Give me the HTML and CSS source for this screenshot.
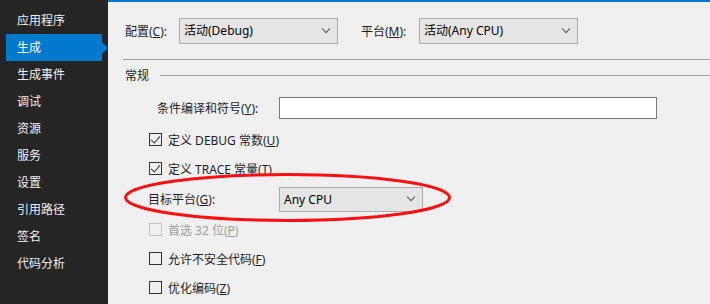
FILE: index.html
```html
<!DOCTYPE html>
<html lang="zh-CN">
<head>
    <meta charset="UTF-8">
    <title>项目属性 - 生成</title>
    <link rel="stylesheet" href="styles.css">
</head>
<body>

    <!-- Menú lateral -->
    <ul class="side-menu">
        <li>应用程序</li>
        <li class="active">生成</li>
        <li>生成事件</li>
        <li>调试</li>
        <li>资源</li>
        <li>服务</li>
        <li>设置</li>
        <li>引用路径</li>
        <li>签名</li>
        <li>代码分析</li>
    </ul>

    <div class="page">
        <div class="config-row">
            <span class="cfg-label">配置(<u>C</u>):</span>
            <div class="combo combo-config">活动(Debug)<span class="chevron"></span></div>
            <span class="cfg-label platform-label">平台(<u>M</u>):</span>
            <div class="combo combo-platform">活动(Any CPU)<span class="chevron"></span></div>
        </div>

        <div class="separator"></div>

        <div class="group-header">
            <span>常规</span>
            <span class="group-line"></span>
        </div>

        <div class="group">
            <div class="row row-symbols">
                <span class="field-label symbols-label">条件编译和符号(<u>Y</u>):</span>
                <div class="textbox"></div>
            </div>

            <div class="row">
                <span class="check checked"></span>
                <span>定义 DEBUG 常数(<u>U</u>)</span>
            </div>

            <div class="row">
                <span class="check checked"></span>
                <span>定义 TRACE 常量(<u>T</u>)</span>
            </div>

            <div class="row row-target">
                <span class="field-label target-label">目标平台(<u>G</u>):</span>
                <div class="combo combo-target">Any CPU<span class="chevron"></span></div>
            </div>

            <div class="row disabled">
                <span class="check"></span>
                <span>首选 32 位(<u>P</u>)</span>
            </div>

            <div class="row">
                <span class="check"></span>
                <span>允许不安全代码(<u>F</u>)</span>
            </div>

            <div class="row">
                <span class="check"></span>
                <span>优化编码(<u>Z</u>)</span>
            </div>
        </div>
    </div>

    <!-- Marca roja sobre "目标平台" -->
    <svg class="highlight" width="710" height="304" viewBox="0 0 710 304">
        <ellipse cx="287.5" cy="197.5" rx="162" ry="23" fill="none" stroke="#ff1010" stroke-width="3"/>
    </svg>

</body>
</html>
```

FILE: styles.css
```css
/* --- General --- */
body {
    margin: 0;
    width: 710px;
    height: 304px;
    overflow: hidden;
    display: flex;
    position: relative;
    font-family: "Noto Sans", "Noto Sans CJK SC", sans-serif;
    font-size: 12px;
    color: #1e1e1e;
    background: #f0f0f0;
}
u { text-decoration-thickness: 1px; text-underline-offset: 1px; }

/* --- Menú lateral --- */
.side-menu {
    list-style: none;
    margin: 0;
    padding: 7px 0 0 6px;
    width: 102px;
    flex-shrink: 0;
    background: #252526;
    color: #f1f1f1;
}
.side-menu li {
    height: 27px;
    line-height: 27px;
    padding-left: 11px;
    width: 85px;
    position: relative;
}
.side-menu li.active { background: #007acc; color: #fff; }
.side-menu li.active::after {
    content: "";
    position: absolute;
    right: -6px;
    top: 8px;
    border-left: 6px solid #007acc;
    border-top: 6px solid transparent;
    border-bottom: 6px solid transparent;
}

/* --- Página --- */
.page {
    flex: 1;
    border-top: 2px solid #007acc;
    padding: 16px 0 0 15px;
    background: #f0f0f0;
}

.config-row {
    display: flex;
    align-items: center;
    height: 26px;
    padding-left: 2px;
}
.cfg-label { width: 54px; }
.platform-label { width: 58px; margin-left: 23px; }

/* --- Combos --- */
.combo {
    box-sizing: border-box;
    height: 26px;
    line-height: 24px;
    background: #e5e5e5;
    border: 1px solid #acacac;
    padding-left: 4px;
    color: #000;
    position: relative;
}
.combo-config { width: 159px; }
.combo-platform { width: 159px; }
.combo-target { width: 144px; height: 25px; line-height: 23px; }
.chevron {
    position: absolute;
    right: 8px;
    top: 50%;
    width: 5px;
    height: 5px;
    margin-top: -5px;
    border-right: 1px solid #555;
    border-bottom: 1px solid #555;
    transform: rotate(45deg);
}

.separator {
    height: 1px;
    background: #a0a0a0;
    margin-top: 15px;
}

.group-header {
    display: flex;
    align-items: center;
    height: 16px;
    margin-top: 7px;
    padding-left: 2px;
}
.group-line {
    flex: 1;
    height: 1px;
    background: #a0a0a0;
    margin-left: 11px;
}

/* --- Grupo "常规" --- */
.group { padding-left: 26px; margin-top: 14px; }
.row {
    display: flex;
    align-items: center;
    height: 29px;
}
.row-symbols { height: 22px; margin-bottom: 6px; }
.row-target { height: 32px; }
.field-label { box-sizing: border-box; width: 130px; }
.symbols-label { padding-left: 8px; }
.target-label { margin-left: -1px; width: 131px; }
.textbox {
    box-sizing: border-box;
    width: 378px;
    height: 22px;
    background: #fff;
    border: 1px solid #7a7a7a;
}

/* --- Checkbox --- */
.check {
    box-sizing: border-box;
    width: 13px;
    height: 13px;
    border: 1px solid #333;
    margin-right: 6px;
    position: relative;
}
.check.checked::after {
    content: "";
    position: absolute;
    left: 3px;
    top: 0px;
    width: 4px;
    height: 8px;
    border-right: 1px solid #333;
    border-bottom: 1px solid #333;
    transform: rotate(40deg);
}
.disabled { color: #a0a0a0; }
.disabled .check { border-color: #c4c4c4; }

/* --- Marca --- */
.highlight {
    position: absolute;
    left: 0;
    top: 0;
    pointer-events: none;
}
```
